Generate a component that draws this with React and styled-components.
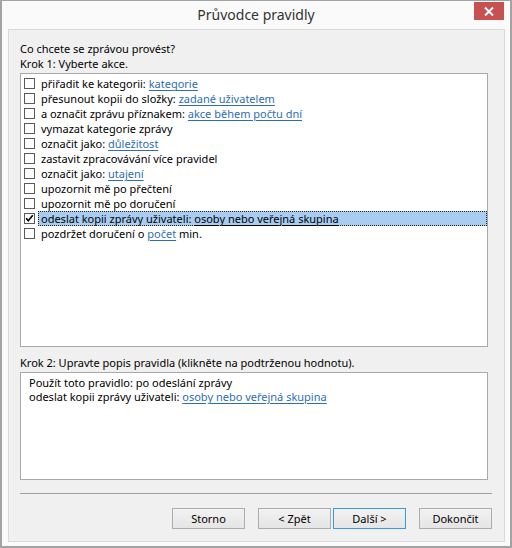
import styled, { createGlobalStyle } from "styled-components";

const GlobalStyle = createGlobalStyle`
  html, body {
    margin: 0;
    padding: 0;
    background: #ffffff;
  }
  body {
    font-family: "Noto Sans", "Open Sans", sans-serif;
    font-size: 11px;
    color: #000;
  }
`;

const Window = styled.div`
  box-sizing: border-box;
  width: 512px;
  height: 548px;
  border: 2px solid #a3a3a3;
  border-top-width: 1px;
  background: #fafafa;
  display: flex;
  flex-direction: column;
`;

const TitleBar = styled.div`
  height: 28px;
  display: grid;
  grid-template-columns: 1fr auto 1fr;
  align-items: start;
`;

const Title = styled.div`
  grid-column: 2;
  font-size: 14px;
  line-height: 20px;
  margin-top: 4px;
  color: #333;
`;

const CloseButton = styled.div`
  grid-column: 3;
  justify-self: end;
  width: 30px;
  height: 18px;
  margin: 1px 6px 0 0;
  background: #c75050;
  display: flex;
  align-items: center;
  justify-content: center;
`;

const Panel = styled.div`
  flex: 1;
  margin: 0 5px 4px 6px;
  border: 1px solid #d9d9d9;
  background: #f0f0f0;
  padding: 11px 12px 12px 11px;
  display: flex;
  flex-direction: column;
`;

const Label = styled.div`
  line-height: 15px;
  height: 15px;
  white-space: nowrap;
  margin-top: ${({ $gap }) => $gap || 0}px;
`;

const ListBox = styled.div`
  box-sizing: border-box;
  height: 274px;
  margin: 2px 4px 0 0;
  border: 1px solid #a9a9a9;
  background: #fff;
  padding: 2px 0 0 3px;
  display: flex;
  flex-direction: column;
`;

const Row = styled.div`
  display: flex;
  align-items: center;
  height: 15px;
`;

const Check = styled.div`
  box-sizing: border-box;
  width: 11px;
  height: 11px;
  border: 1px solid #5a5a5a;
  background: #fff;
  flex: none;
  display: flex;
  align-items: center;
  justify-content: center;
`;

const RowText = styled.div`
  box-sizing: border-box;
  flex: 1;
  height: 15px;
  line-height: 13px;
  margin-left: 3px;
  padding-left: 2px;
  white-space: nowrap;
  border: 1px dotted ${({ $selected }) => ($selected ? "#222" : "transparent")};
  background: ${({ $selected }) => ($selected ? "#a8cdf1" : "transparent")};
`;

const Link = styled.span`
  color: ${({ $plain }) => ($plain ? "#000" : "#2f6db3")};
  text-decoration: underline;
  text-underline-offset: 2px;
`;

const DescBox = styled.div`
  box-sizing: border-box;
  height: 108px;
  margin: 2px 4px 0 0;
  border: 1px solid #a9a9a9;
  background: #fff;
  padding: 3px 8px;
`;

const DescLine = styled.div`
  line-height: 14px;
  white-space: nowrap;
`;

const Separator = styled.div`
  height: 1px;
  background: #a0a0a0;
  margin-top: 13px;
`;

const ButtonRow = styled.div`
  display: flex;
  justify-content: flex-end;
  margin-top: 14px;
`;

const Button = styled.div`
  box-sizing: border-box;
  width: 73px;
  height: 21px;
  margin-left: ${({ $gap }) => $gap}px;
  border: 1px solid ${({ $focused }) => ($focused ? "#3c97ec" : "#acacac")};
  background: linear-gradient(#f2f2f2, #e5e5e5);
  display: flex;
  align-items: center;
  justify-content: center;
  line-height: 19px;
`;

const actions = [
  ["přiřadit ke kategorii: ", "kategorie"],
  ["přesunout kopii do složky: ", "zadané uživatelem"],
  ["a označit zprávu příznakem: ", "akce během počtu dní"],
  ["vymazat kategorie zprávy"],
  ["označit jako: ", "důležitost"],
  ["zastavit zpracovávání více pravidel"],
  ["označit jako: ", "utajení"],
  ["upozornit mě po přečtení"],
  ["upozornit mě po doručení"],
  ["odeslat kopii zprávy uživateli: ", "osoby nebo veřejná skupina", true],
];

const CheckMark = () => (
  <svg width="11" height="11" viewBox="0 0 11 11">
    <path d="M1.5 5.2 L4 8.2 L9.5 1.5" fill="none" stroke="#000" strokeWidth="2" />
  </svg>
);

const App = () => (
  <>
    <GlobalStyle />
    <Window>
      <TitleBar>
        <Title>Průvodce pravidly</Title>
        <CloseButton>
          <svg width="10" height="9" viewBox="0 0 10 9">
            <path d="M1 0.5 L9 8.5 M9 0.5 L1 8.5" stroke="#fff" strokeWidth="2" />
          </svg>
        </CloseButton>
      </TitleBar>
      <Panel>
        <Label>Co chcete se zprávou provést?</Label>
        <Label>Krok 1: Vyberte akce.</Label>
        <ListBox>
          {actions.map(([text, link, checked], i) => (
            <Row key={i}>
              <Check>{checked && <CheckMark />}</Check>
              <RowText $selected={checked}>
                {text}
                {link && <Link $plain={checked}>{link}</Link>}
              </RowText>
            </Row>
          ))}
          <Row>
            <Check />
            <RowText>
              pozdržet doručení o <Link>počet</Link> min.
            </RowText>
          </Row>
        </ListBox>
        <Label $gap={8}>Krok 2: Upravte popis pravidla (klikněte na podtrženou hodnotu).</Label>
        <DescBox>
          <DescLine>Použít toto pravidlo: po odeslání zprávy</DescLine>
          <DescLine>
            odeslat kopii zprávy uživateli: <Link>osoby nebo veřejná skupina</Link>
          </DescLine>
        </DescBox>
        <Separator />
        <ButtonRow>
          <Button>Storno</Button>
          <Button $gap={13}>&lt; Zpět</Button>
          <Button $gap={2} $focused>Další &gt;</Button>
          <Button $gap={13}>Dokončit</Button>
        </ButtonRow>
      </Panel>
    </Window>
  </>
);

export default App;
